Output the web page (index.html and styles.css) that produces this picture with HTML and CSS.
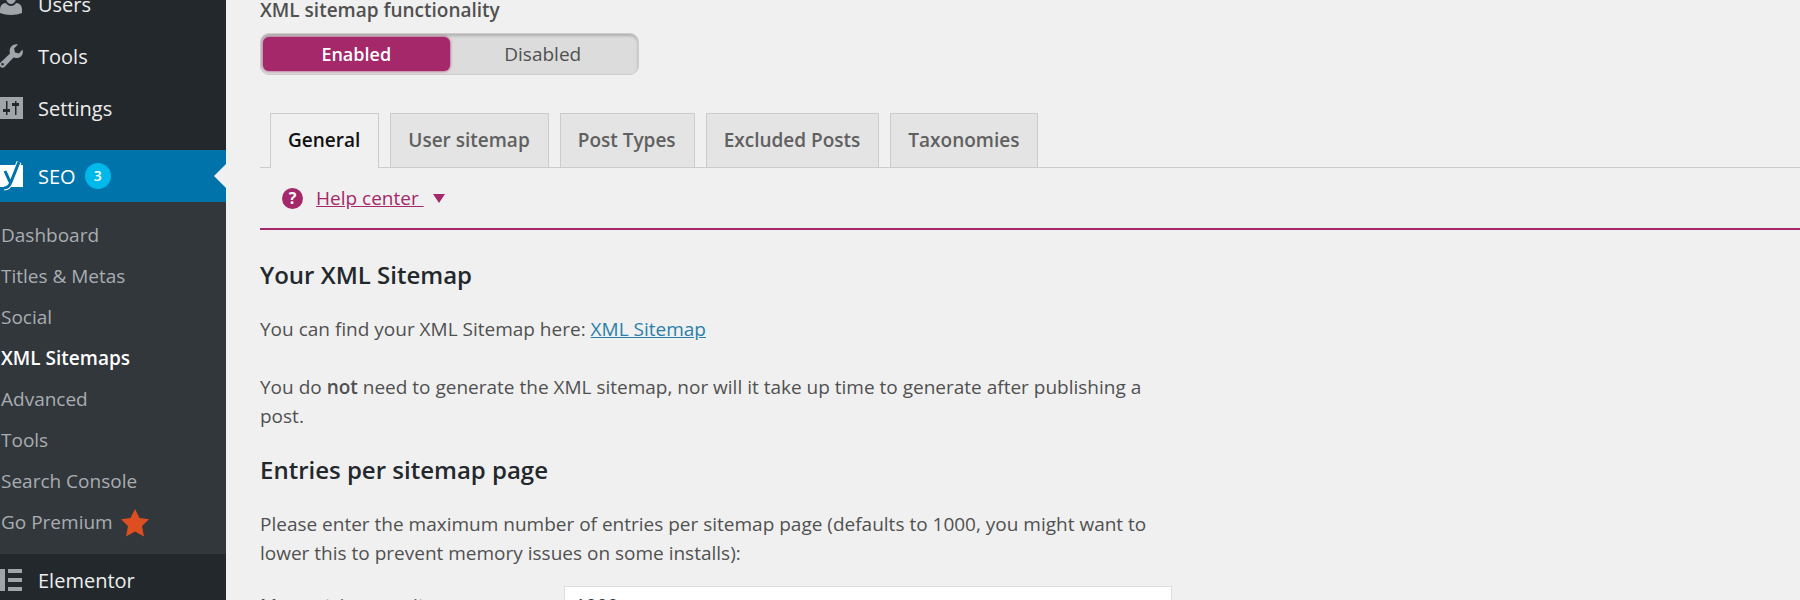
FILE: index.html
```html
<!DOCTYPE html>
<html lang="en">
<head>
  <meta charset="UTF-8">
  <meta name="viewport" content="width=device-width, initial-scale=1.0">
  <title>XML Sitemaps</title>
  <link rel="stylesheet" href="styles.css">
</head>
<body>

<div class="page">
  <nav class="sidebar">
    <a class="menu-item" href="#users">
      <svg class="menu-icon" viewBox="0 0 24 24"><path d="M12 1a5 5 0 0 1 5 5c0 3-2 6-5 6S7 9 7 6a5 5 0 0 1 5-5zM7 11c1 2 3 3 5 3s4-1 5-3c4 0 6 3 6 7v3c-6 2.500-16 2.500-22 0v-3c0-4 2-7 6-7z"/></svg>
      Users
    </a>
    <a class="menu-item" href="#tools">
      <svg class="menu-icon" viewBox="0 0 24 24"><path d="M19 0.500l-4 4 1 4 4 1 3.500-4c1.200 4-1 8.500-6 8.500-1.500 0-2.300-.3-3-.5L5.500 23c-3 2-6-1-4.500-4L11 9.500C9.500 4 13.500-.8 19 .5zM3.500 19a1.300 1.300 0 1 0 .1 2.600A1.300 1.300 0 0 0 3.500 19z" fill-rule="evenodd"/></svg>
      Tools
    </a>
    <a class="menu-item" href="#settings">
      <svg class="menu-icon" viewBox="0 0 24 24"><path d="M0 1h24v22H0z"/><path class="icon-cut" d="M7 5h1.500v8H11v3H8.500v3H7v-3H4v-3h3zM16 5h1.500v2H20v3h-2.500v9H16v-9h-3V7h3z"/></svg>
      Settings
    </a>
    <a class="menu-item menu-current" href="#seo">
      <svg class="menu-icon yoast" viewBox="0 0 24 30"><path class="icon-white" d="M0 4h24v22H0z"/><path class="yoast-edge" d="M6 10l5 11M20 1l-8 20c-1.500 4-3 6-7 6"/><path class="yoast-y" d="M6 10l5 11M20 1l-8 20c-1.500 4-3 6-7 6"/></svg>
      SEO
      <span class="badge">3</span>
    </a>
    <div class="submenu">
      <a href="#dashboard">Dashboard</a>
      <a href="#titles">Titles &amp; Metas</a>
      <a href="#social">Social</a>
      <a class="active" href="#sitemaps">XML Sitemaps</a>
      <a href="#advanced">Advanced</a>
      <a href="#seo-tools">Tools</a>
      <a href="#console">Search Console</a>
      <a href="#premium">Go Premium
        <svg class="star" viewBox="0 0 28 28"><path d="M14 0l4.500 9 9.500 1.200-7 6.800 2 10.500-9-5-9 5L7 17 0 10.200 9.500 9z"/></svg>
      </a>
    </div>
    <a class="menu-item" href="#elementor">
      <svg class="menu-icon" viewBox="0 0 24 24"><path d="M0 1h6v22H0zM9 1h14v4H9zM9 10h14v4H9zM9 19h14v4H9z"/></svg>
      Elementor
    </a>
  </nav>

  <main class="content">
    <fieldset class="switch">
      <legend>XML sitemap functionality</legend>
      <div class="switch-track">
        <input type="radio" name="sitemap" id="enabled" checked>
        <label for="enabled">Enabled</label>
        <input type="radio" name="sitemap" id="disabled">
        <label for="disabled">Disabled</label>
      </div>
    </fieldset>

    <div class="tabs">
      <a class="tab tab-active" href="#general">General</a>
      <a class="tab" href="#user-sitemap">User sitemap</a>
      <a class="tab" href="#post-types">Post Types</a>
      <a class="tab" href="#excluded-posts">Excluded Posts</a>
      <a class="tab" href="#taxonomies">Taxonomies</a>
    </div>

    <div class="help">
      <button type="button" class="help-btn">
        <span class="help-icon">?</span>
        <span class="help-text">Help center&nbsp;</span>
        <svg class="arrow" viewBox="0 0 12 9"><path d="M0 0h12L6 9z"/></svg>
      </button>
    </div>

    <h2>Your XML Sitemap</h2>
    <p>You can find your XML Sitemap here: <a href="#sitemap_index">XML Sitemap</a></p>
    <p class="note">You do <strong>not</strong> need to generate the XML sitemap, nor will it take up time to generate after publishing a post.</p>

    <h2>Entries per sitemap page</h2>
    <p>Please enter the maximum number of entries per sitemap page (defaults to 1000, you might want to lower this to prevent memory issues on some installs):</p>

    <div class="form-row">
      <label for="entries">Max entries per sitemap:</label>
      <input type="text" id="entries" value="1000">
    </div>
  </main>
</div>

</body>
</html>
```
FILE: styles.css
```css
* {
  box-sizing: border-box;
}

body {
  margin: 0;
  height: 100vh;
  overflow: hidden;
  background-color: #f0f0f0;
  color: #505050;
  font-family: "Open Sans", "Noto Sans", sans-serif;
  font-size: 19px;
  line-height: 29px;
}

.page {
  display: flex;
}

/* sidebar */
.sidebar {
  flex: 0 0 226px;
  min-height: 100vh;
  margin-top: -22px;
  background-color: #23282d;
}

.menu-item {
  display: flex;
  align-items: center;
  height: 52px;
  color: #eee;
  font-size: 20px;
  text-decoration: none;
}

.menu-icon {
  width: 24px;
  height: 24px;
  margin-left: -1px;
  margin-right: 15px;
  fill: #a0a5aa;
}

.icon-cut {
  fill: #23282d;
}

.menu-current {
  position: relative;
  margin-top: 16px;
  background-color: #0073aa;
  color: #fff;
}

.yoast {
  height: 30px;
}

.icon-white {
  fill: #fff;
}

.yoast-edge {
  fill: none;
  stroke: #fff;
  stroke-width: 5;
}

.yoast-y {
  fill: none;
  stroke: #0073aa;
  stroke-width: 3;
}

.menu-current::after {
  content: "";
  position: absolute;
  right: 0;
  top: 14px;
  border: 12px solid transparent;
  border-left-width: 0;
  border-right-color: #f0f0f0;
}

.badge {
  width: 26px;
  height: 26px;
  margin-left: 9px;
  border-radius: 50%;
  background-color: #00b9eb;
  font-size: 14px;
  font-weight: 600;
  line-height: 26px;
  text-align: center;
}

.submenu {
  padding: 13px 0 11px;
  background-color: #32373c;
}

.submenu a {
  display: flex;
  align-items: center;
  height: 41px;
  padding-left: 1px;
  color: #a9adb1;
  text-decoration: none;
}

.submenu .active {
  color: #fff;
  font-weight: 600;
}

.star {
  width: 28px;
  height: 28px;
  margin-left: 8px;
  fill: #dd4f20;
}

/* content */
.content {
  flex: 1;
  padding-left: 34px;
}

.switch {
  margin: -4px 0 0;
  padding: 0;
  border: 0;
}

.switch legend {
  padding: 0;
  font-weight: 600;
}

.switch-track {
  display: flex;
  width: 379px;
  height: 42px;
  margin-top: 8px;
  padding: 3px 2px;
  border: 1px solid #ccc;
  border-radius: 9px;
  background-color: #dcdcdc;
  box-shadow: inset 0 2px 3px rgba(0, 0, 0, 0.2);
}

.switch-track input {
  position: absolute;
  opacity: 0;
}

.switch-track label {
  flex: 1;
  border-radius: 6px;
  line-height: 34px;
  text-align: center;
}

.switch-track input:checked + label {
  background-color: #a4286a;
  box-shadow: 0 0 3px #a4286a;
  color: #fff;
  font-size: 18px;
  font-weight: 600;
}

.tabs {
  display: flex;
  gap: 11px;
  margin-top: 38px;
  padding-left: 10px;
  border-bottom: 1px solid #ccc;
}

.tab {
  padding: 12px 18px 12px 17px;
  border: 1px solid #ccc;
  border-bottom: 0;
  background-color: #e4e4e4;
  color: #606060;
  font-weight: 600;
  text-decoration: none;
}

.tab-active {
  margin-bottom: -1px;
  background-color: #f0f0f0;
  color: #111;
}

.help {
  padding: 16px 22px 15px;
  border-bottom: 2px solid #a4286a;
}

.help-btn {
  display: flex;
  align-items: center;
  padding: 0;
  border: 0;
  background: none;
  color: #a4286a;
  font: inherit;
}

.help-icon {
  width: 21px;
  height: 21px;
  margin-right: 13px;
  border-radius: 50%;
  background-color: #a4286a;
  color: #fff;
  font-size: 16px;
  font-weight: 700;
  line-height: 21px;
}

.help-text {
  text-decoration: underline;
}

.arrow {
  width: 12px;
  height: 9px;
  margin-left: 9px;
  fill: #a4286a;
}

h2 {
  margin: 30px 0 26px;
  color: #23282d;
  font-size: 24px;
  font-weight: 600;
  line-height: 29px;
}

p {
  max-width: 900px;
  margin: 0;
}

p a {
  color: #2a80a8;
}

p strong {
  font-weight: 600;
}

.note {
  margin-top: 29px;
}

.note + h2 {
  margin-top: 24px;
}

.form-row {
  display: flex;
  align-items: center;
  margin-top: 18px;
}

.form-row label {
  flex: 0 0 304px;
}

.form-row input {
  width: 608px;
  height: 38px;
  padding: 0 10px;
  border: 1px solid #ddd;
  background-color: #fff;
  color: #32373c;
  font: inherit;
}
```
